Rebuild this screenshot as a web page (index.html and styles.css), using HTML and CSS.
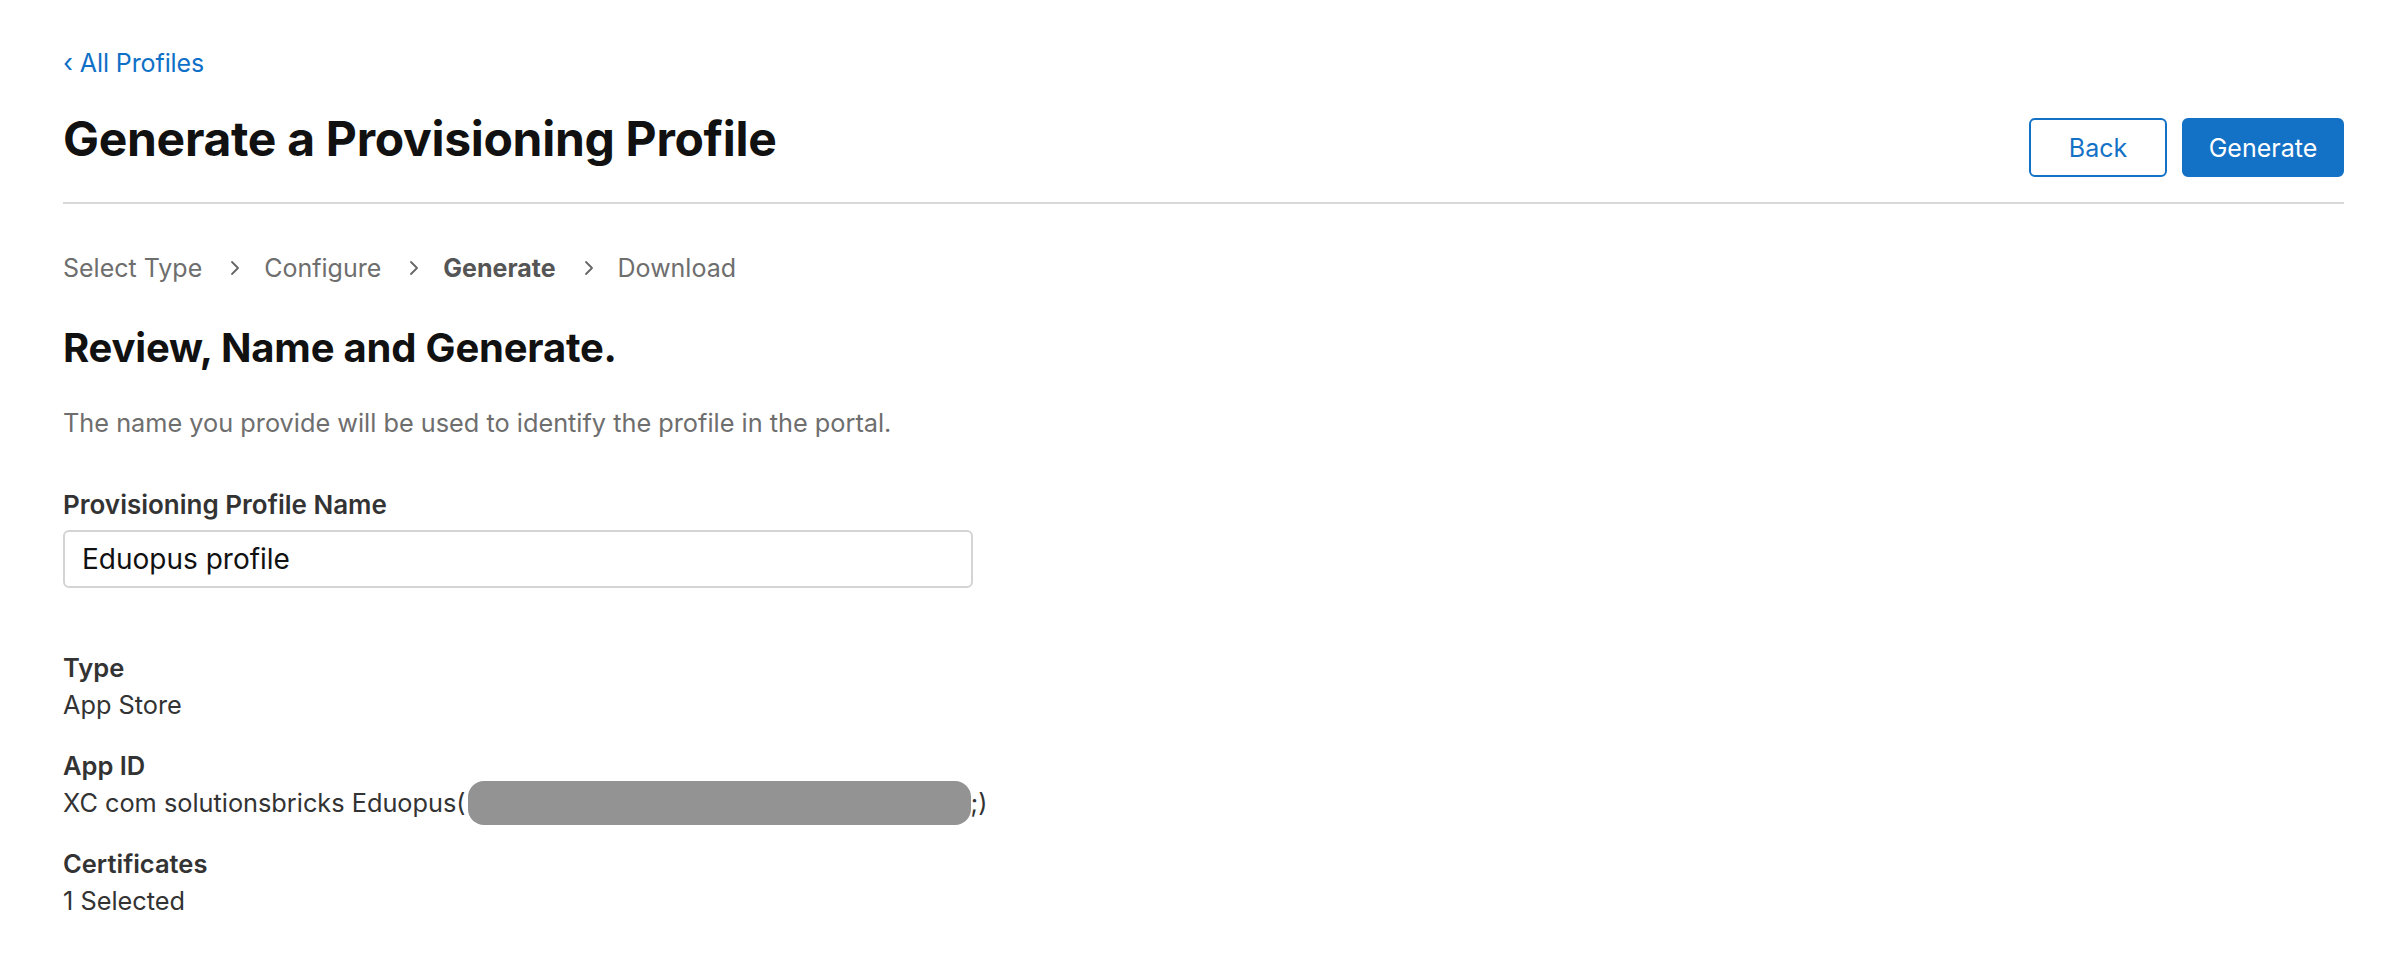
FILE: index.html
```html
<!DOCTYPE html>
<html lang="en">
<head>
<meta charset="utf-8">
<title>Generate a Provisioning Profile</title>
<link rel="stylesheet" href="styles.css">
</head>
<body>
<main class="page">
  <a class="back-link" href="#"><span class="back-chevron">‹</span> All Profiles</a>
  <header class="page-header">
    <h1 class="page-title">Generate a Provisioning Profile</h1>
    <div class="actions">
      <button class="btn btn-secondary" type="button">Back</button>
      <button class="btn btn-primary" type="button">Generate</button>
    </div>
  </header>
  <nav class="steps">
    <span class="step">Select Type</span>
    <span class="step-sep"><svg viewBox="0 0 10 16" width="10" height="16"><path d="M2 2 L8 8 L2 14" fill="none" stroke="currentColor" stroke-width="1.8" stroke-linecap="round" stroke-linejoin="round"/></svg></span>
    <span class="step">Configure</span>
    <span class="step-sep"><svg viewBox="0 0 10 16" width="10" height="16"><path d="M2 2 L8 8 L2 14" fill="none" stroke="currentColor" stroke-width="1.8" stroke-linecap="round" stroke-linejoin="round"/></svg></span>
    <span class="step step-current">Generate</span>
    <span class="step-sep"><svg viewBox="0 0 10 16" width="10" height="16"><path d="M2 2 L8 8 L2 14" fill="none" stroke="currentColor" stroke-width="1.8" stroke-linecap="round" stroke-linejoin="round"/></svg></span>
    <span class="step">Download</span>
  </nav>
  <section class="review">
    <h2 class="section-title">Review, Name and Generate.</h2>
    <p class="section-desc">The name you provide will be used to identify the profile in the portal.</p>
    <label class="field-label" for="profile-name">Provisioning Profile Name</label>
    <input class="text-input" id="profile-name" type="text" value="Eduopus profile">
    <dl class="details">
      <div class="detail">
        <dt>Type</dt>
        <dd>App Store</dd>
      </div>
      <div class="detail">
        <dt>App ID</dt>
        <dd>XC com solutionsbricks Eduopus(<span class="redacted"></span>;)</dd>
      </div>
      <div class="detail">
        <dt>Certificates</dt>
        <dd>1 Selected</dd>
      </div>
    </dl>
  </section>
</main>
</body>
</html>
```
FILE: styles.css
```css
html, body {
  margin: 0;
  padding: 0;
  background: #ffffff;
}

body {
  font-family: "Inter", "Liberation Sans", sans-serif;
  color: #333333;
  font-size: 25px;
}

.page {
  padding: 44px 52px 0 63px;
}

.back-link {
  display: inline-block;
  color: #0f70c7;
  text-decoration: none;
  font-size: 25px;
  line-height: 38px;
  letter-spacing: -0.1px;
}

.back-chevron {
  font-size: 26px;
}

.page-header {
  display: flex;
  align-items: center;
  justify-content: space-between;
  height: 120px;
  border-bottom: 2px solid #d8d8d8;
}

.page-title {
  margin: 0 0 6px;
  font-size: 48px;
  font-weight: 700;
  color: #111111;
  letter-spacing: -0.3px;
  line-height: 1;
}

.actions {
  display: flex;
  gap: 15px;
  align-self: flex-start;
  margin-top: 36px;
}

.btn {
  font-family: inherit;
  font-size: 25px;
  height: 59px;
  border-radius: 6px;
  cursor: pointer;
  padding: 0;
}

.btn-secondary {
  width: 138px;
  background: #ffffff;
  color: #1371c6;
  border: 2px solid #1371c6;
}

.btn-primary {
  width: 162px;
  background: #1371c6;
  color: #ffffff;
  border: 2px solid #1371c6;
}

.steps {
  display: flex;
  align-items: center;
  margin-top: 45px;
  color: #6e6e6e;
  font-size: 25px;
  line-height: 38px;
}

.step-sep {
  display: flex;
  align-items: center;
  margin: 0 24px 0 28px;
  color: #666666;
}

.step-current {
  font-weight: 700;
  color: #555555;
}

.review {
  margin-top: 37px;
}

.section-title {
  margin: 0;
  font-size: 40px;
  font-weight: 700;
  color: #111111;
  line-height: 48px;
  letter-spacing: -0.2px;
}

.section-desc {
  margin: 32px 0 0;
  color: #6e6e6e;
  font-size: 25.3px;
  line-height: 38px;
}

.field-label {
  display: block;
  margin-top: 44px;
  font-size: 26px;
  font-weight: 600;
  color: #333333;
  line-height: 38px;
}

.text-input {
  display: block;
  box-sizing: border-box;
  width: 910px;
  height: 58px;
  margin-top: 6px;
  padding: 0 17px;
  border: 2px solid #d4d4d4;
  border-radius: 6px;
  font-family: inherit;
  font-size: 28px;
  color: #111111;
  outline: none;
}

.details {
  margin: 61px 0 0;
  display: flex;
  flex-direction: column;
  gap: 24px;
}

.detail dt {
  font-size: 25.5px;
  font-weight: 600;
  color: #333333;
  line-height: 37px;
}

.detail dd {
  margin: 0;
  font-size: 25.3px;
  color: #333333;
  line-height: 37px;
  height: 37px;
  display: flex;
  align-items: center;
}

.redacted {
  display: inline-block;
  flex: none;
  width: 503px;
  height: 44px;
  border-radius: 16px;
  background: #939393;
  margin-left: 2px;
}
```
